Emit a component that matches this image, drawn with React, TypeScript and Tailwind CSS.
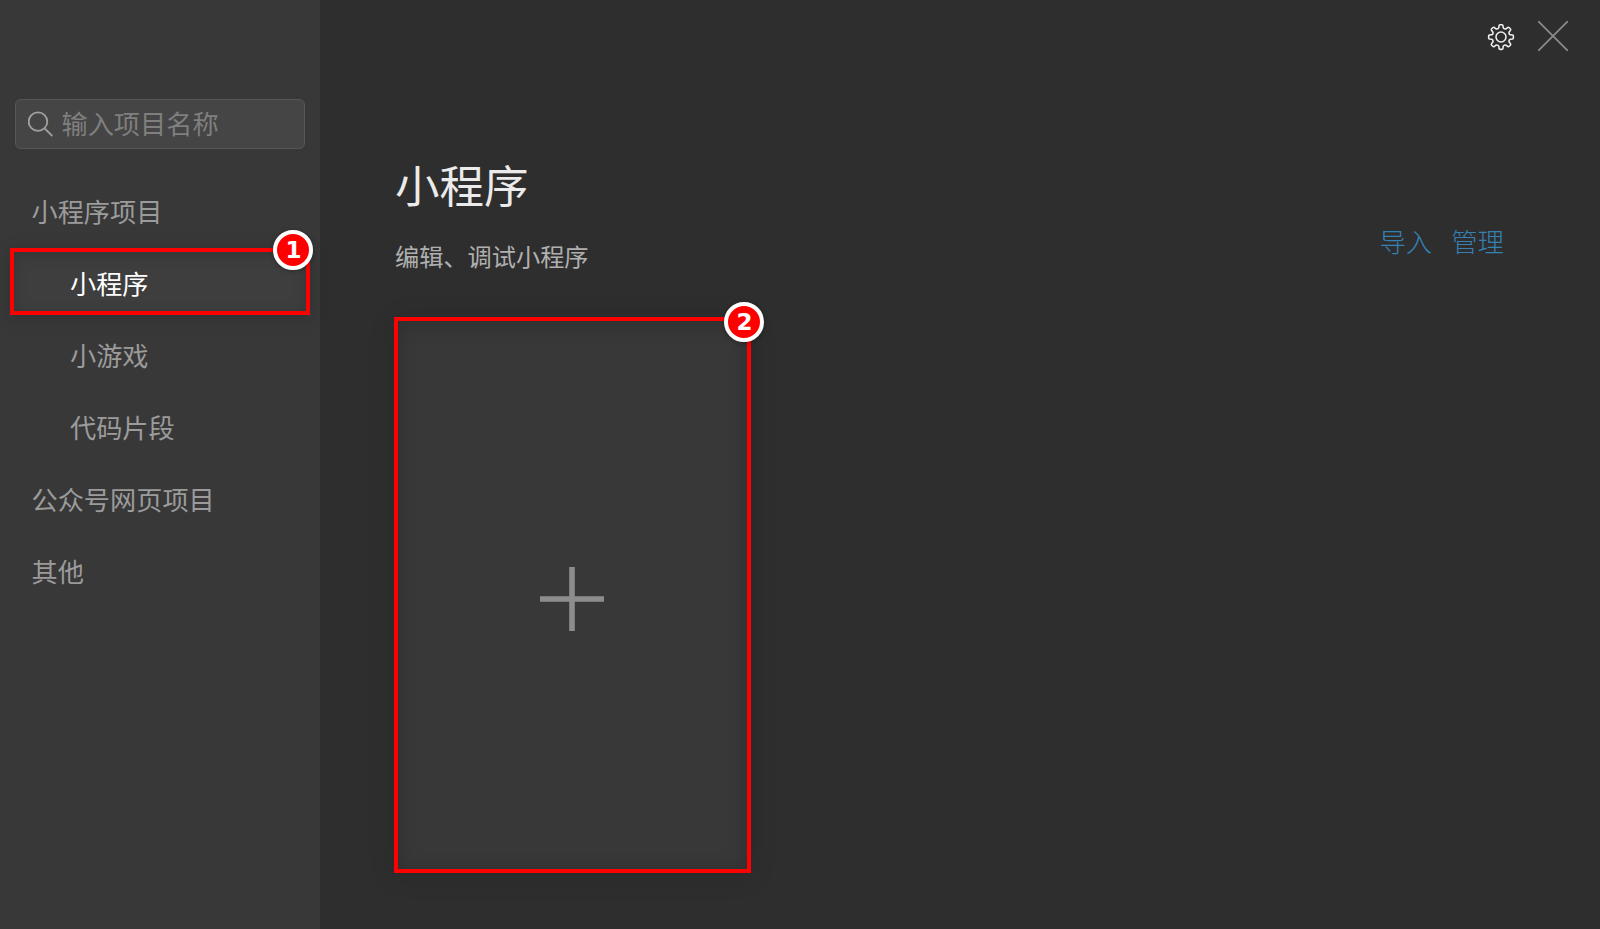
import React from "react";

type NavEntry = { label: string; nested?: boolean; active?: boolean };

const entries: NavEntry[] = [
  { label: "小程序项目" },
  { label: "小程序", nested: true, active: true },
  { label: "小游戏", nested: true },
  { label: "代码片段", nested: true },
  { label: "公众号网页项目" },
  { label: "其他" },
];

function Badge({ value, className }: { value: string; className: string }) {
  return (
    <span
      className={`absolute flex size-10 items-center justify-center rounded-full border-4 border-white bg-[#ff0000] pl-px font-['DejaVu_Sans',sans-serif] text-[23px] leading-none font-bold text-white shadow-[0_1px_5px_rgba(0,0,0,0.3)] ${className}`}
    >
      {value}
    </span>
  );
}

function gearPath(): string {
  const at = (r: number, deg: number) => {
    const a = ((deg - 90) * Math.PI) / 180;
    return `${(14 + r * Math.cos(a)).toFixed(2)} ${(14 + r * Math.sin(a)).toFixed(2)}`;
  };
  let d = "";
  for (let i = 0; i < 8; i++) {
    const c = i * 45;
    d += `${i === 0 ? "M" : "L"}${at(9.6, c - 13)} L${at(11.7, c - 9.5)} Q${at(12.4, c - 8)} ${at(12.4, c - 5)} L${at(12.4, c + 5)} Q${at(12.4, c + 8)} ${at(11.7, c + 9.5)} L${at(9.6, c + 13)} Q${at(8.1, c + 22.5)} ${at(9.6, c + 32)} `;
  }
  return d + "Z";
}

function Sidebar() {
  return (
    <aside className="flex w-80 shrink-0 flex-col bg-[#383838] pt-[99px]">
      <div className="mx-[15px] flex h-[50px] items-center rounded-[6px] border border-[#575757] bg-[#454545] pl-3">
        <svg className="size-[26px] shrink-0" viewBox="0 0 26 26" fill="none" stroke="#a0a0a0" strokeWidth="1.8">
          <circle cx="10" cy="10.6" r="9.3" />
          <path d="M16.6 17.3 24.3 25" />
        </svg>
        <span className="mb-0.5 ml-[7.5px] text-[26.2px] leading-[38px] text-[#7f7f7f]">输入项目名称</span>
      </div>
      <nav className="mt-[27px] flex flex-col">
        {entries.map((e) => (
          <div
            key={e.label}
            className={`relative flex h-18 items-center text-[26.2px] leading-[38px] ${e.nested ? "pl-[70px]" : "pl-[31.5px]"} ${e.active ? "text-white" : "text-[#9b9b9b]"}`}
          >
            {e.active && (
              <>
                <div className="absolute top-0 left-2.5 h-[67px] w-[300px] border-4 border-[#ff0000] bg-[#3e3e3e] shadow-[0_3px_18px_rgba(0,0,0,0.13),inset_0_3px_14px_rgba(0,0,0,0.16)]" />
                <Badge value="1" className="top-[-18px] left-[273px]" />
              </>
            )}
            <span className="relative mb-[3px]">{e.label}</span>
          </div>
        ))}
      </nav>
    </aside>
  );
}

export default function App() {
  return (
    <div className="flex h-[929px] w-[1600px] overflow-hidden bg-[#2e2e2e] font-['Noto_Sans_CJK_SC',sans-serif]">
      <Sidebar />
      <main className="flex flex-1 flex-col">
        <header className="flex h-[72px] items-center justify-end gap-[23px] pr-8">
          <svg className="mt-0.5 size-7" viewBox="0 0 28 28" fill="none" stroke="#f0f0f0" strokeWidth="1.55" strokeLinejoin="round">
            <path d={gearPath()} />
            <circle cx="14" cy="14" r="5" />
          </svg>
          <svg className="size-[30px]" viewBox="0 0 30 30" stroke="#8a8a8a" strokeWidth="1.8">
            <path d="M0 0 30 30M30 0 0 30" />
          </svg>
        </header>
        <section className="flex justify-between pt-20 pr-24 pl-[75px]">
          <div>
            <h1 className="text-[44.5px] leading-[64px] text-[#ebebeb]">小程序</h1>
            <p className="mt-[22px] text-[24.2px] leading-9 text-[#b0b0b0]">编辑、调试小程序</p>
          </div>
          <div className="flex gap-[19px] pt-[70px] text-[26.4px] leading-[38px] font-light text-[#3680b2]">
            <span>导入</span>
            <span>管理</span>
          </div>
        </section>
        <div className="relative mt-[43px] ml-[74px] flex h-[556px] w-[357px] items-center justify-center border-4 border-[#ff0000] bg-[#383838] shadow-[0_3px_24px_rgba(0,0,0,0.13),inset_0_3px_20px_rgba(0,0,0,0.18)]">
          <svg className="relative top-1 right-[0.5px] size-16" viewBox="0 0 64 64" stroke="#8d8d8d" strokeWidth="5.6">
            <path d="M0 32H64M32 0V64" />
          </svg>
          <Badge value="2" className="top-[-19px] left-[326px]" />
        </div>
      </main>
    </div>
  );
}
